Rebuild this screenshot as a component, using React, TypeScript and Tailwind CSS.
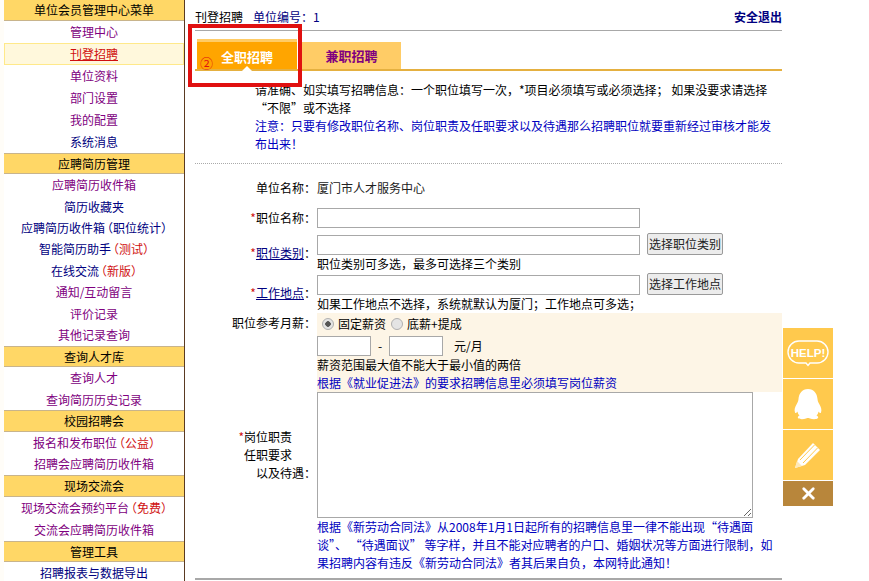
import { X } from "lucide-react"
import type { ReactNode } from "react"

const PURPLE = "text-[#800080]"
const NAVY = "text-[#000080]"
const RED = "text-[#d01010]"

type MenuItem = { label: string; color: string; note?: string; noteColor?: string; active?: boolean }
type MenuGroup = { title: string; rowClass: string; items: MenuItem[] }

const menu: MenuGroup[] = [
  {
    title: "单位会员管理中心菜单",
    rowClass: "h-[22px]",
    items: [
      { label: "管理中心", color: PURPLE },
      { label: "刊登招聘", color: RED, active: true },
      { label: "单位资料", color: PURPLE },
      { label: "部门设置", color: PURPLE },
      { label: "我的配置", color: PURPLE },
      { label: "系统消息", color: NAVY },
    ],
  },
  {
    title: "应聘简历管理",
    rowClass: "h-[21.45px]",
    items: [
      { label: "应聘简历收件箱", color: PURPLE },
      { label: "简历收藏夹", color: NAVY },
      { label: "应聘简历收件箱", color: NAVY, note: "（职位统计）", noteColor: NAVY },
      { label: "智能简历助手", color: NAVY, note: "（测试）" },
      { label: "在线交流", color: NAVY, note: "（新版）" },
      { label: "通知/互动留言", color: PURPLE },
      { label: "评价记录", color: PURPLE },
      { label: "其他记录查询", color: PURPLE },
    ],
  },
  {
    title: "查询人才库",
    rowClass: "h-[21.45px]",
    items: [
      { label: "查询人才", color: PURPLE },
      { label: "查询简历历史记录", color: PURPLE },
    ],
  },
  {
    title: "校园招聘会",
    rowClass: "h-[21.7px]",
    items: [
      { label: "报名和发布职位", color: PURPLE, note: "（公益）" },
      { label: "招聘会应聘简历收件箱", color: PURPLE },
    ],
  },
  {
    title: "现场交流会",
    rowClass: "h-[22px]",
    items: [
      { label: "现场交流会预约平台", color: PURPLE, note: "（免费）" },
      { label: "交流会应聘简历收件箱", color: PURPLE },
    ],
  },
  {
    title: "管理工具",
    rowClass: "h-[21px]",
    items: [{ label: "招聘报表与数据导出", color: NAVY }],
  },
]

function Sidebar() {
  return (
    <aside className="w-[185px] h-full shrink-0 pl-[4px] bg-[#fffdf8] border-r border-[#5a3a22] overflow-hidden">
      <div className="-mt-px">
        {menu.map((group) => (
          <div key={group.title} className="bg-white">
            <div
              className={
                group.rowClass +
                " flex items-center justify-center bg-[#ffd766] border-y border-[#c8b48c] text-black"
              }
            >
              {group.title}
            </div>
            {group.items.map((item) => (
              <div
                key={item.label + (item.note ?? "")}
                className={
                  group.rowClass +
                  " flex items-center justify-center " +
                  item.color +
                  (item.active ? " bg-[#fff8dc] border border-[#ffe98a] underline" : "")
                }
              >
                {item.label}
                {item.note && (
                  <span className={"ml-[2px] [font-feature-settings:'halt'] " + (item.noteColor ?? RED)}>
                    {item.note}
                  </span>
                )}
              </div>
            ))}
          </div>
        ))}
      </div>
    </aside>
  )
}

function Label({ children, required }: { children: ReactNode; required?: boolean }) {
  return (
    <span className="text-black">
      {required && <span className={RED}>*</span>}
      {children}
      <span className="[font-feature-settings:'halt']">：</span>
    </span>
  )
}

const inputClass = "block h-[20px] bg-white border border-[#a8a8a8]"
const buttonClass =
  "block h-[22px] w-[76px] bg-[#ececec] border border-[#9a9a9a] rounded-[2px] text-[#222] text-center leading-[20px]"

function Tabs() {
  return (
    <div className="h-[32px] mt-[8px] flex items-end gap-[5px] pl-[2px] border-b-[2px] border-[#e5b040]">
      <div className="relative w-[100px] h-[30px] bg-[#ffa500] border-t-[3px] border-[#ffcc66] flex items-center justify-center pt-[2px] text-[13px] text-white font-bold">
        全职招聘
        <span className="absolute left-[3px] bottom-[-3px] text-[13px] text-[#e01010] font-normal">②</span>
        <span className="absolute left-[45px] bottom-[-2px] w-0 h-0 border-x-[5px] border-x-transparent border-b-[5px] border-b-white" />
      </div>
      <div className="w-[99px] h-[27px] bg-[#ffcc66] flex items-center justify-center text-[13px] text-[#800080] font-bold">
        兼职招聘
      </div>
    </div>
  )
}

function Form() {
  return (
    <div className="flex flex-col">
      <div className="flex h-[18px] items-center mt-[15px]">
        <div className="w-[117px] text-right pr-[2px]">
          <Label>单位名称</Label>
        </div>
        <div className="ml-[5px] text-[#222]">厦门市人才服务中心</div>
      </div>

      <div className="flex mt-[11px] h-[20px] items-center">
        <div className="w-[117px] text-right pr-[2px]">
          <Label required>职位名称</Label>
        </div>
        <input className={inputClass + " ml-[5px] w-[323px]"} />
      </div>

      <div className="flex mt-[5px]">
        <div className="w-[117px] text-right pr-[2px] pt-[11px]">
          <Label required>
            <span className="text-[#000080] underline">职位类别</span>
          </Label>
        </div>
        <div className="ml-[5px]">
          <div className="flex items-end gap-[7px]">
            <input className={inputClass + " w-[323px]"} />
            <button className={buttonClass}>选择职位类别</button>
          </div>
          <p>职位类别可多选，最多可选择三个类别</p>
        </div>
      </div>

      <div className="flex">
        <div className="w-[117px] text-right pr-[2px] pt-[11px]">
          <Label required>
            <span className="text-[#000080] underline">工作地点</span>
          </Label>
        </div>
        <div className="ml-[5px]">
          <div className="flex items-end gap-[7px]">
            <input className={inputClass + " w-[323px]"} />
            <button className={buttonClass}>选择工作地点</button>
          </div>
          <p>如果工作地点不选择，系统就默认为厦门；工作地点可多选；</p>
        </div>
      </div>

      <div className="flex">
        <div className="w-[117px] text-right pr-[2px] pt-[1px]">
          <Label>职位参考月薪</Label>
        </div>
        <div className="ml-[5px] flex-1 h-[79px] bg-[#fdf5e6] pt-[2px]">
          <div className="flex items-center h-[18px] pl-[5px]">
            <input
              type="radio"
              name="salary"
              defaultChecked
              className="appearance-none w-[12px] h-[12px] rounded-full border border-[#b0b0b0] bg-[#e4e4e4] checked:bg-[radial-gradient(circle,#555_0,#555_2.5px,#e4e4e4_3px)]"
            />
            <span className="ml-[4px]">固定薪资</span>
            <input
              type="radio"
              name="salary"
              className="appearance-none ml-[5px] w-[12px] h-[12px] rounded-full border border-[#b0b0b0] bg-[#e4e4e4]"
            />
            <span className="ml-[4px]">底薪+提成</span>
          </div>
          <div className="flex items-center mt-[3px] h-[20px]">
            <input className={inputClass + " w-[54px]"} />
            <span className="w-[18px] text-center">-</span>
            <input className={inputClass + " w-[54px]"} />
            <span className="ml-[11px]">元/月</span>
          </div>
          <p>薪资范围最大值不能大于最小值的两倍</p>
          <p className="text-[#0000c0]">根据《就业促进法》的要求招聘信息里必须填写岗位薪资</p>
        </div>
      </div>

      <div className="flex">
        <div className="w-[117px] flex flex-col justify-center items-end pr-[2px]">
          <div className="pr-[18px]">
            <span className={RED}>*</span>岗位职责
          </div>
          <div className="pr-[18px]">任职要求</div>
          <div>
            以及待遇<span className="[font-feature-settings:'halt']">：</span>
          </div>
        </div>
        <textarea className="block ml-[5px] w-[436px] h-[126px] bg-white border border-[#a8a8a8]" />
      </div>

      <p className="ml-[122px] w-[465px] text-[#0000c0]">
        根据《新劳动合同法》从2008年1月1日起所有的招聘信息里一律不能出现“待遇面谈”、&nbsp;“待遇面议”&nbsp;等字样，并且不能对应聘者的户口、婚姻状况等方面进行限制，如果招聘内容有违反《新劳动合同法》者其后果自负，本网特此通知！
      </p>

      <div className="mt-[6px] border-t-[2px] border-[#a8a8a8]" />
    </div>
  )
}

function FloatBar() {
  return (
    <div className="absolute left-[783px] top-[328px] w-[50px] flex flex-col">
      <div className="h-[50px] bg-[#ffc94d] flex items-center justify-center">
        <svg width="44" height="28" viewBox="0 0 44 28" fill="none">
          <path
            d="M13 2h18a11 11 0 0 1 0 22h-7l-2 2.5-2-2.5h-7a11 11 0 0 1 0-22z"
            stroke="#fff"
            strokeWidth="1.4"
          />
          <text
            x="22"
            y="18"
            textAnchor="middle"
            fill="#fff"
            fontSize="11.5"
            fontWeight="700"
            fontFamily="Liberation Sans, sans-serif"
          >
            HELP!
          </text>
        </svg>
      </div>
      <div className="h-[50px] mt-px bg-[#ffc94d] flex items-center justify-center">
        <svg width="30" height="32" viewBox="0 0 30 32" fill="#fff">
          <path d="M15 1c6 0 9 4.500 9.500 10 .2 2 .5 3 2 5.500 1.500 2.500 2.500 5.500 1.500 8-.5 1-1.500 .5-2.500-1-.3 2-1 3-2 4 1.500 .8 2 1.500 1.500 2.500-1 1.500-5.500 1.500-8 .5-1-.4-1.500-.5-2-.5s-1 .1-2 .5c-2.500 1-7 1-8-.5-.5-1 0-1.700 1.500-2.500-1-1-1.700-2-2-4-1 1.500-2 2-2.500 1-1-2.500 0-5.500 1.500-8 1.500-2.500 1.800-3.500 2-5.500C6 5.500 9 1 15 1z" />
        </svg>
      </div>
      <div className="h-[50px] mt-px bg-[#ffc94d] flex items-center justify-center">
        <svg width="30" height="30" viewBox="0 0 30 30" fill="none">
          <path d="M2 28l3-9L20 3l7 7-15 15z" fill="#fff" />
          <path d="M2 28l2-7 5 5z" fill="#ffe9b8" />
          <path d="M7 20L21.500 5M10 23L24.500 8" stroke="#ffc94d" strokeWidth="1" />
        </svg>
      </div>
      <div className="h-[25px] mt-px bg-[#b8863b] flex items-center justify-center">
        <X size={19} strokeWidth={3.5} color="#fff" />
      </div>
    </div>
  )
}

export default function App() {
  return (
    <div
      lang="zh-CN"
      className="relative flex w-[869px] h-[581px] overflow-hidden bg-white text-[12px] leading-[18px] text-black [font-family:'Noto_Sans_CJK_SC','Liberation_Sans',sans-serif]"
    >
      <Sidebar />
      <main className="w-[587px] ml-[10px]">
        <div className="h-[31px] flex items-end justify-between pb-[4px] border-b border-[#a8a8a8]">
          <div>
            刊登招聘<span className="ml-[10px] text-[#000080]">单位编号：1</span>
          </div>
          <div className="font-bold text-[#000080]">安全退出</div>
        </div>
        <Tabs />
        <div className="ml-[60px] w-[516px] mt-[10px] pb-[10px]">
          <p>请准确、如实填写招聘信息：一个职位填写一次，*项目必须填写或必须选择； 如果没要求请选择“不限”或不选择</p>
          <p className="text-[#0000c0]">
            注意：只要有修改职位名称、岗位职责及任职要求以及待遇那么招聘职位就要重新经过审核才能发布出来！
          </p>
        </div>
        <div className="border-t border-dotted border-[#aaaaaa]" />
        <Form />
      </main>
      <FloatBar />
      <div className="absolute left-[188px] top-[24px] w-[114px] h-[63px] border-[4px] border-[#e01010]" />
    </div>
  )
}
